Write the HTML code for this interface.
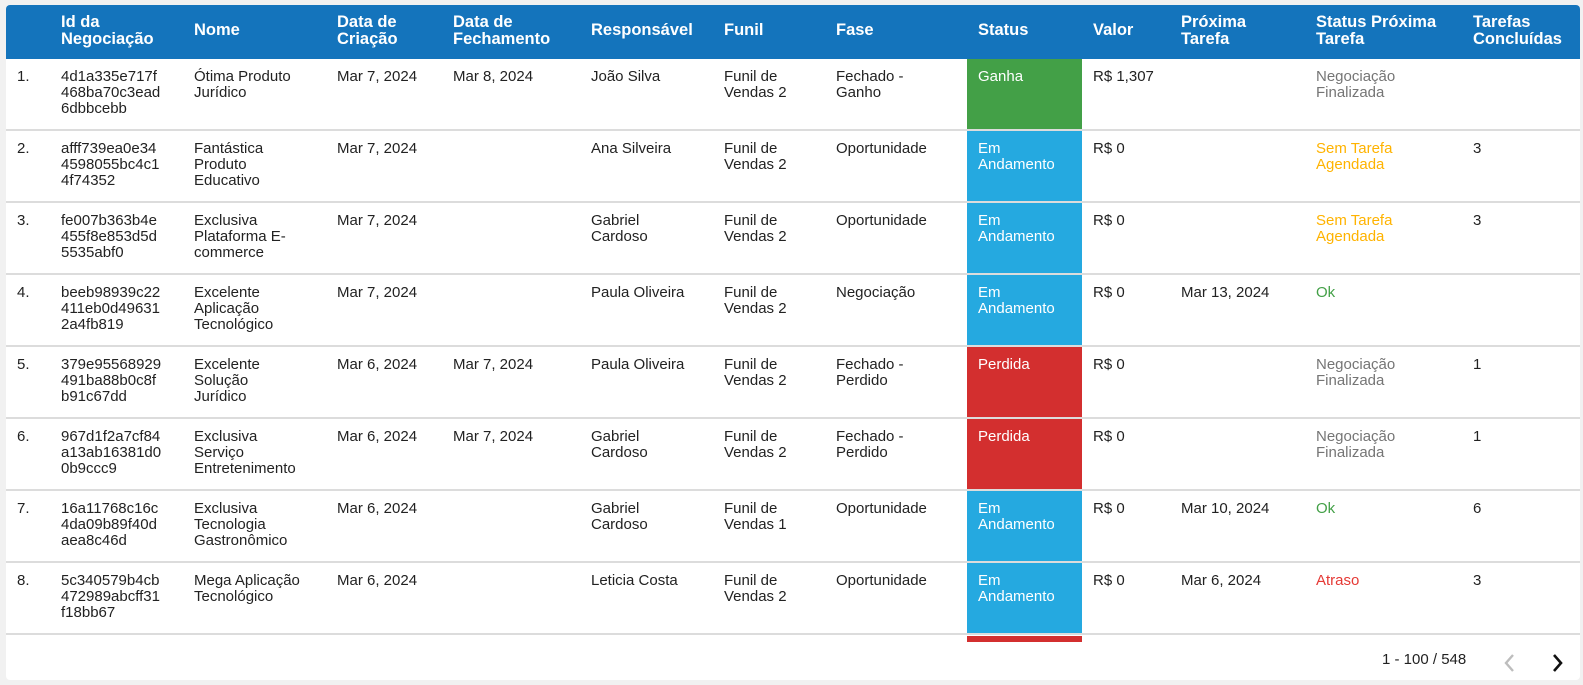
<!DOCTYPE html>
<html><head><meta charset="utf-8"><style>
*{margin:0;padding:0;box-sizing:border-box}
body{width:1583px;height:685px;background:#f1f1f1;font-family:"Liberation Sans",Arial,sans-serif;position:relative;overflow:hidden}
.card{position:absolute;left:6px;top:5px;width:1574px;height:675px;background:#fff;border-radius:4px;overflow:hidden}
.hd{position:absolute;left:0;top:0;width:1574px;height:54px;background:#1474bc}
.h{position:absolute;color:#fff;font-weight:bold;font-size:16.5px;line-height:17px;top:9px}
.h.one{top:17px}
.row{position:absolute;left:0;width:1574px;height:72px;border-bottom:2px solid #dcdcdc}
.c{position:absolute;top:10px;font-size:15px;line-height:16px;color:#222}
.st{position:absolute;left:961px;width:115px;top:0;height:70px;color:#fff;font-size:15px;line-height:16px;padding:10px 0 0 11px}
.g{background:#43a047}.b{background:#25a9e0}.r{background:#d32f2f}
.gr{color:#757575}.or{color:#ffb300}.ok{color:#43a047}.at{color:#e53935}
.pg{position:absolute;left:1382px;top:651px;font-size:15px;color:#222}
</style></head><body>
<div class="card">
<div class="hd">
<div class="h" style="left:55px">Id da<br>Negociação</div>
<div class="h one" style="left:188px">Nome</div>
<div class="h" style="left:331px">Data de<br>Criação</div>
<div class="h" style="left:447px">Data de<br>Fechamento</div>
<div class="h one" style="left:585px">Responsável</div>
<div class="h one" style="left:718px">Funil</div>
<div class="h one" style="left:830px">Fase</div>
<div class="h one" style="left:972px">Status</div>
<div class="h one" style="left:1087px">Valor</div>
<div class="h" style="left:1175px">Próxima<br>Tarefa</div>
<div class="h" style="left:1310px">Status Próxima<br>Tarefa</div>
<div class="h" style="left:1467px">Tarefas<br>Concluídas</div>
</div>

<div class="row" style="top:54px">
<div class="st g">Ganha</div>
<div class="c" style="left:11px">1.</div>
<div class="c" style="left:55px">4d1a335e717f<br>468ba70c3ead<br>6dbbcebb</div>
<div class="c" style="left:188px">Ótima Produto<br>Jurídico</div>
<div class="c" style="left:331px">Mar 7, 2024</div>
<div class="c" style="left:447px">Mar 8, 2024</div>
<div class="c" style="left:585px">João Silva</div>
<div class="c" style="left:718px">Funil de<br>Vendas 2</div>
<div class="c" style="left:830px">Fechado -<br>Ganho</div>
<div class="c" style="left:1087px">R$ 1,307</div>
<div class="c gr" style="left:1310px">Negociação<br>Finalizada</div>
</div>

<div class="row" style="top:126px">
<div class="st b">Em<br>Andamento</div>
<div class="c" style="left:11px">2.</div>
<div class="c" style="left:55px">afff739ea0e34<br>4598055bc4c1<br>4f74352</div>
<div class="c" style="left:188px">Fantástica<br>Produto<br>Educativo</div>
<div class="c" style="left:331px">Mar 7, 2024</div>
<div class="c" style="left:585px">Ana Silveira</div>
<div class="c" style="left:718px">Funil de<br>Vendas 2</div>
<div class="c" style="left:830px">Oportunidade</div>
<div class="c" style="left:1087px">R$ 0</div>
<div class="c or" style="left:1310px">Sem Tarefa<br>Agendada</div>
<div class="c" style="left:1467px">3</div>
</div>

<div class="row" style="top:198px">
<div class="st b">Em<br>Andamento</div>
<div class="c" style="left:11px">3.</div>
<div class="c" style="left:55px">fe007b363b4e<br>455f8e853d5d<br>5535abf0</div>
<div class="c" style="left:188px">Exclusiva<br>Plataforma E-<br>commerce</div>
<div class="c" style="left:331px">Mar 7, 2024</div>
<div class="c" style="left:585px">Gabriel<br>Cardoso</div>
<div class="c" style="left:718px">Funil de<br>Vendas 2</div>
<div class="c" style="left:830px">Oportunidade</div>
<div class="c" style="left:1087px">R$ 0</div>
<div class="c or" style="left:1310px">Sem Tarefa<br>Agendada</div>
<div class="c" style="left:1467px">3</div>
</div>

<div class="row" style="top:270px">
<div class="st b">Em<br>Andamento</div>
<div class="c" style="left:11px">4.</div>
<div class="c" style="left:55px">beeb98939c22<br>411eb0d49631<br>2a4fb819</div>
<div class="c" style="left:188px">Excelente<br>Aplicação<br>Tecnológico</div>
<div class="c" style="left:331px">Mar 7, 2024</div>
<div class="c" style="left:585px">Paula Oliveira</div>
<div class="c" style="left:718px">Funil de<br>Vendas 2</div>
<div class="c" style="left:830px">Negociação</div>
<div class="c" style="left:1087px">R$ 0</div>
<div class="c" style="left:1175px">Mar 13, 2024</div>
<div class="c ok" style="left:1310px">Ok</div>
</div>

<div class="row" style="top:342px">
<div class="st r">Perdida</div>
<div class="c" style="left:11px">5.</div>
<div class="c" style="left:55px">379e95568929<br>491ba88b0c8f<br>b91c67dd</div>
<div class="c" style="left:188px">Excelente<br>Solução<br>Jurídico</div>
<div class="c" style="left:331px">Mar 6, 2024</div>
<div class="c" style="left:447px">Mar 7, 2024</div>
<div class="c" style="left:585px">Paula Oliveira</div>
<div class="c" style="left:718px">Funil de<br>Vendas 2</div>
<div class="c" style="left:830px">Fechado -<br>Perdido</div>
<div class="c" style="left:1087px">R$ 0</div>
<div class="c gr" style="left:1310px">Negociação<br>Finalizada</div>
<div class="c" style="left:1467px">1</div>
</div>

<div class="row" style="top:414px">
<div class="st r">Perdida</div>
<div class="c" style="left:11px">6.</div>
<div class="c" style="left:55px">967d1f2a7cf84<br>a13ab16381d0<br>0b9ccc9</div>
<div class="c" style="left:188px">Exclusiva<br>Serviço<br>Entretenimento</div>
<div class="c" style="left:331px">Mar 6, 2024</div>
<div class="c" style="left:447px">Mar 7, 2024</div>
<div class="c" style="left:585px">Gabriel<br>Cardoso</div>
<div class="c" style="left:718px">Funil de<br>Vendas 2</div>
<div class="c" style="left:830px">Fechado -<br>Perdido</div>
<div class="c" style="left:1087px">R$ 0</div>
<div class="c gr" style="left:1310px">Negociação<br>Finalizada</div>
<div class="c" style="left:1467px">1</div>
</div>

<div class="row" style="top:486px">
<div class="st b">Em<br>Andamento</div>
<div class="c" style="left:11px">7.</div>
<div class="c" style="left:55px">16a11768c16c<br>4da09b89f40d<br>aea8c46d</div>
<div class="c" style="left:188px">Exclusiva<br>Tecnologia<br>Gastronômico</div>
<div class="c" style="left:331px">Mar 6, 2024</div>
<div class="c" style="left:585px">Gabriel<br>Cardoso</div>
<div class="c" style="left:718px">Funil de<br>Vendas 1</div>
<div class="c" style="left:830px">Oportunidade</div>
<div class="c" style="left:1087px">R$ 0</div>
<div class="c" style="left:1175px">Mar 10, 2024</div>
<div class="c ok" style="left:1310px">Ok</div>
<div class="c" style="left:1467px">6</div>
</div>

<div class="row" style="top:558px">
<div class="st b">Em<br>Andamento</div>
<div class="c" style="left:11px">8.</div>
<div class="c" style="left:55px">5c340579b4cb<br>472989abcff31<br>f18bb67</div>
<div class="c" style="left:188px">Mega Aplicação<br>Tecnológico</div>
<div class="c" style="left:331px">Mar 6, 2024</div>
<div class="c" style="left:585px">Leticia Costa</div>
<div class="c" style="left:718px">Funil de<br>Vendas 2</div>
<div class="c" style="left:830px">Oportunidade</div>
<div class="c" style="left:1087px">R$ 0</div>
<div class="c" style="left:1175px">Mar 6, 2024</div>
<div class="c at" style="left:1310px">Atraso</div>
<div class="c" style="left:1467px">3</div>
</div>

<div style="position:absolute;left:961px;top:631px;width:115px;height:6px;background:#d32f2f"></div>
</div>
<div class="pg">1 - 100 / 548</div>
<svg style="position:absolute;left:1500px;top:653px" width="20" height="20" viewBox="0 0 20 20"><path d="M13 2 L6 10 L13 18" fill="none" stroke="#bdbdbd" stroke-width="2.4"/></svg>
<svg style="position:absolute;left:1548px;top:653px" width="20" height="20" viewBox="0 0 20 20"><path d="M6 2 L13 10 L6 18" fill="none" stroke="#111" stroke-width="2.6"/></svg>
</body></html>
